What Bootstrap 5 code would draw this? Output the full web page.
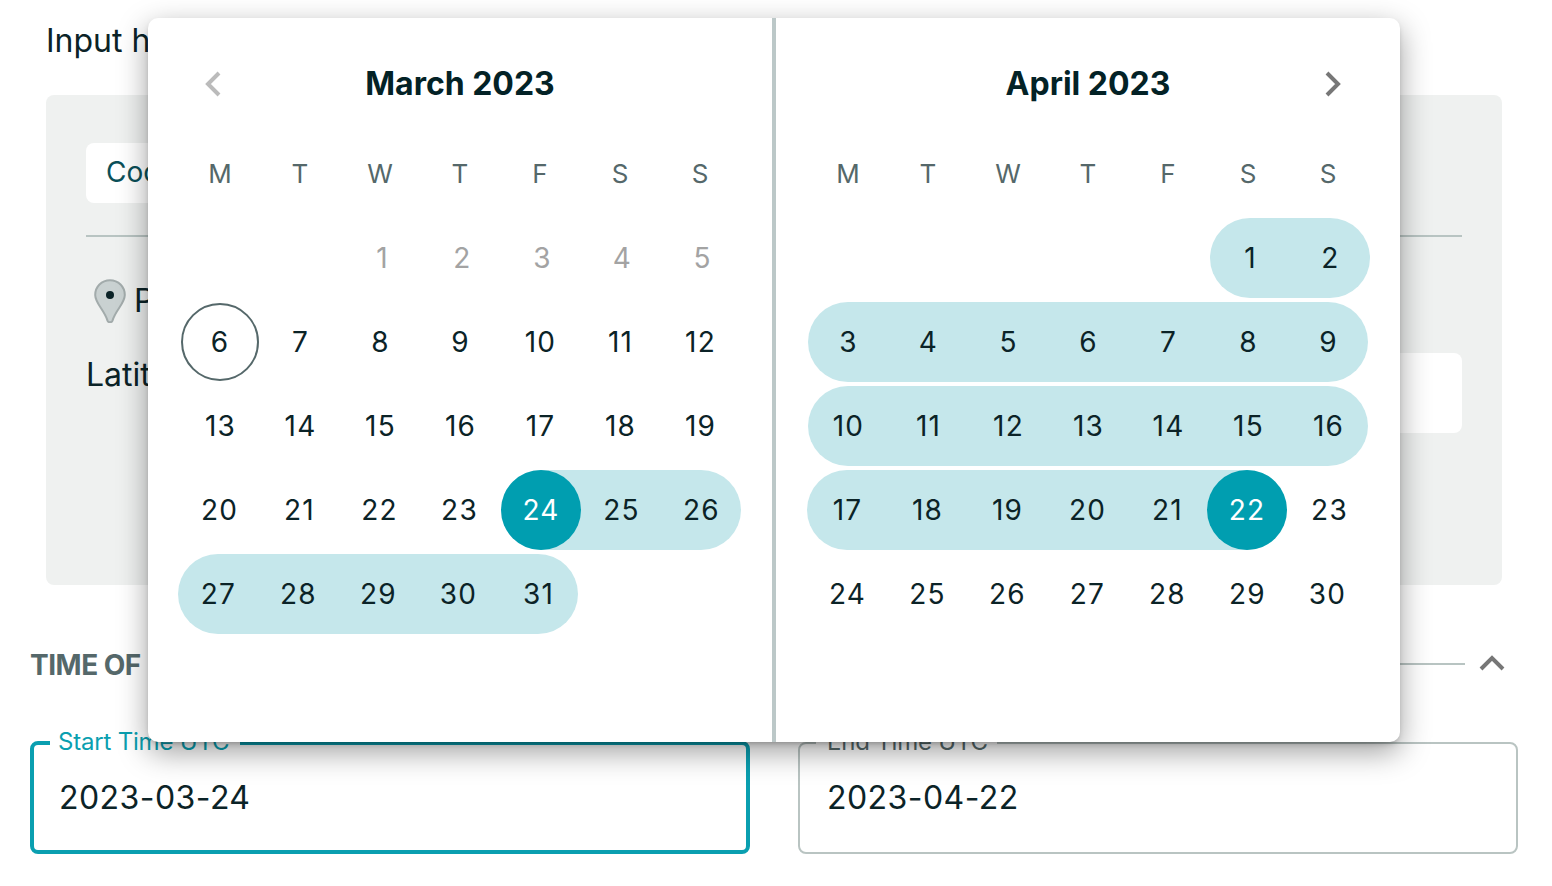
<!DOCTYPE html>
<html lang="en">
<head>
<meta charset="utf-8">
<title>Date range</title>
<link href="https://cdn.jsdelivr.net/npm/bootstrap@5.3.0/dist/css/bootstrap.min.css" rel="stylesheet">
<style>
html,body{height:886px;overflow:hidden;background:#fff}
body{font-family:Inter,"Liberation Sans",sans-serif;color:#0b2327}
.pg{position:relative;height:886px;padding:0 34px 0 30px}
.ttl{font-size:32px;line-height:40px;padding:21px 0 0 16px;margin:0 0 34px}
.pnl{margin:0 16px;height:490px;background:#eff1f0;border-radius:8px;padding:48px 40px 0}
.tabb{width:220px;height:60px;background:#fff;border-radius:8px;font-size:28px;color:#0a4f58;padding-left:20px;line-height:58px}
.dv{height:2px;background:#b8c4c2;margin:32px 0 42px}
.pt{font-size:32px;line-height:44px;gap:8px;padding-left:8px}
.lat{gap:40px;margin-top:30px;font-size:32px;line-height:44px}
.latin{flex:1;height:80px;background:#fff;border-radius:8px}
.sec{height:40px;margin-top:59px;gap:14px}
.sech{font-size:28px;font-weight:700;color:#55686a;letter-spacing:-.5px;line-height:40px;white-space:nowrap;margin:2px 0 0}
.secl{flex:1;height:2px;background:#b8c4c2}
.chv{margin:-2px 13px 0 0}
.flds{gap:48px;margin-top:43px}
.fld{width:720px;height:127px;border:2px solid #b9c4c2;border-radius:8px;margin:0;padding:0;color:#55686a}
.fld legend{float:none;width:auto;font-size:24px;line-height:29px;letter-spacing:-.2px;margin:0 0 0 16px;padding:0 9px 2px 11px}
.fld.act{border:4px solid #0a9fb0;color:#0a9fb0}
.fld.act legend{padding:0 11px 2px 8px}
.val{font-size:32px;line-height:40px;letter-spacing:.45px;color:#0b2327;margin-top:20px;padding-left:27px}
.fld.act .val{padding-left:25px}
.pop{position:absolute;left:148px;top:18px;width:1252px;height:724px;background:#fff;border-radius:10px;box-shadow:0 10px 30px rgba(0,0,0,.38),0 3px 6px -3px rgba(0,0,0,.35)}
.pane{width:624px;padding:42px 32px 0}
.sep{width:4px;background:#bcc8c8}
.hd{height:48px}
.hdl{padding:0 25px 0 23px}
.mon{font-size:32px;font-weight:700;color:#032226;margin:0;padding-left:2px;line-height:48px}
.wk{height:40px;margin:45px 0 25px;font-size:26px;color:#55686a}
.wk>div{width:80px;text-align:center}
.wkr{height:80px;margin-bottom:4px}
.c{width:80px;height:80px;flex:none;display:flex;align-items:center;justify-content:center;font-size:28px;letter-spacing:1.2px;padding-left:1px;color:#0b2327}
.off{color:#a3a3a3}
.rg{background:#c5e7eb}
.rs{border-radius:40px 0 0 40px}
.re{border-radius:0 40px 40px 0}
.dot{width:80px;height:80px;flex:none;border-radius:50%;background:#009eb0;color:#fff;display:flex;align-items:center;justify-content:center;margin-left:-1px}
.tod{width:78px;height:78px;flex:none;border:2px solid #55686a;border-radius:50%;display:flex;align-items:center;justify-content:center;margin-left:-1px}
.s2{margin-left:2px}.n1{margin-left:-1px}.n2{margin-left:-2px}
.blk{width:20px}
</style>
</head>
<body>
<div class="pg">
  <h1 class="ttl fw-normal">Input how you want to search</h1>
  <div class="pnl">
    <div class="tabb">Coordinates</div>
    <div class="dv"></div>
    <div class="pt d-flex align-items-center">
      <svg width="32" height="44" viewBox="0 0 32 44"><path d="M16 1.2C7.6 1.2 1.2 7.8 1.2 16c0 8.4 9.2 15 12.3 25.6.7 2.2 4.3 2.2 5 0C21.6 31 30.8 24.4 30.8 16 30.8 7.8 24.4 1.2 16 1.2z" fill="#c9d1d1" stroke="#a2abab" stroke-width="2"/><circle cx="16" cy="16" r="4" fill="#0b2327"/></svg>
      <span>Point</span>
    </div>
    <div class="lat d-flex align-items-start"><span>Latitude</span><div class="latin"></div></div>
  </div>
  <div class="sec d-flex align-items-center">
    <h2 class="sech">TIME OF DAY</h2>
    <div class="secl"></div>
    <svg width="26" height="16" viewBox="0 0 26 16" class="chv"><path d="M2 14 13 3l11 11" fill="none" stroke="#777" stroke-width="4"/></svg>
  </div>
  <div class="flds d-flex">
    <fieldset class="fld act"><legend>Start Time UTC</legend><div class="val">2023-03-24</div></fieldset>
    <fieldset class="fld"><legend>End Time UTC</legend><div class="val">2023-04-22</div></fieldset>
  </div>

  <div class="pop d-flex">
    <div class="pane">
      <div class="hd hdl d-flex align-items-center justify-content-between">
        <svg width="20" height="26" viewBox="0 0 20 26"><path d="M16 2 5 13l11 11" fill="none" stroke="#bbb" stroke-width="4"/></svg>
        <h3 class="mon">March 2023</h3>
        <span class="d-inline-block blk"></span>
      </div>
      <div class="wk d-flex align-items-center"><div>M</div><div>T</div><div>W</div><div>T</div><div>F</div><div>S</div><div>S</div></div>
      <div class="wkr d-flex s2"><div class="c"></div><div class="c"></div><div class="c off">1</div><div class="c off">2</div><div class="c off">3</div><div class="c off">4</div><div class="c off">5</div></div>
      <div class="wkr d-flex"><div class="c"><span class="tod">6</span></div><div class="c">7</div><div class="c">8</div><div class="c">9</div><div class="c">10</div><div class="c">11</div><div class="c">12</div></div>
      <div class="wkr d-flex"><div class="c">13</div><div class="c">14</div><div class="c">15</div><div class="c">16</div><div class="c">17</div><div class="c">18</div><div class="c">19</div></div>
      <div class="wkr d-flex n1"><div class="c">20</div><div class="c">21</div><div class="c">22</div><div class="c">23</div><div class="c rg rs s2"><span class="dot">24</span></div><div class="c rg">25</div><div class="c rg re">26</div></div>
      <div class="wkr d-flex n2"><div class="c rg rs">27</div><div class="c rg">28</div><div class="c rg">29</div><div class="c rg">30</div><div class="c rg re">31</div><div class="c"></div><div class="c"></div></div>
    </div>
    <div class="sep"></div>
    <div class="pane">
      <div class="hd hdl d-flex align-items-center justify-content-between">
        <span class="d-inline-block blk"></span>
        <h3 class="mon">April 2023</h3>
        <svg width="20" height="26" viewBox="0 0 20 26"><path d="M4 2l11 11L4 24" fill="none" stroke="#777" stroke-width="4"/></svg>
      </div>
      <div class="wk d-flex align-items-center"><div>M</div><div>T</div><div>W</div><div>T</div><div>F</div><div>S</div><div>S</div></div>
      <div class="wkr d-flex s2"><div class="c"></div><div class="c"></div><div class="c"></div><div class="c"></div><div class="c"></div><div class="c rg rs">1</div><div class="c rg re">2</div></div>
      <div class="wkr d-flex"><div class="c rg rs">3</div><div class="c rg">4</div><div class="c rg">5</div><div class="c rg">6</div><div class="c rg">7</div><div class="c rg">8</div><div class="c rg re">9</div></div>
      <div class="wkr d-flex"><div class="c rg rs">10</div><div class="c rg">11</div><div class="c rg">12</div><div class="c rg">13</div><div class="c rg">14</div><div class="c rg">15</div><div class="c rg re">16</div></div>
      <div class="wkr d-flex n1"><div class="c rg rs">17</div><div class="c rg">18</div><div class="c rg">19</div><div class="c rg">20</div><div class="c rg">21</div><div class="c rg re"><span class="dot">22</span></div><div class="c s2">23</div></div>
      <div class="wkr d-flex n1"><div class="c">24</div><div class="c">25</div><div class="c">26</div><div class="c">27</div><div class="c">28</div><div class="c">29</div><div class="c">30</div></div>
    </div>
  </div>
</div>
<script src="https://cdn.jsdelivr.net/npm/bootstrap@5.3.0/dist/js/bootstrap.bundle.min.js"></script>
</body>
</html>
